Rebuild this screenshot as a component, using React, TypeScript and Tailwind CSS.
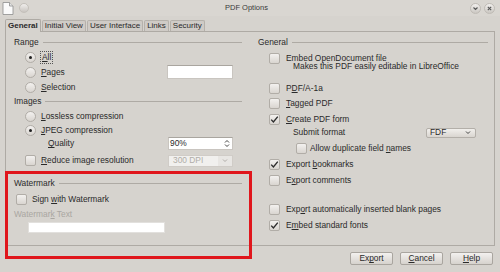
import React from "react";

function Check({ checked = false }: { checked?: boolean }) {
  return (
    <span className="w-[11px] h-[11px] shrink-0 rounded-[2px] border border-[#b1ada7] bg-gradient-to-b from-[#f3f1ef] to-[#d9d5d0] flex items-center justify-center">
      {checked && (
        <svg width="9" height="9" viewBox="0 0 9 9">
          <path d="M1.2 4.6 L3.4 7 L7.8 1.6" fill="none" stroke="#2d2d2d" strokeWidth="1.4" />
        </svg>
      )}
    </span>
  );
}

function Radio({ checked = false }: { checked?: boolean }) {
  return (
    <span className="w-[11px] h-[11px] shrink-0 rounded-full border border-[#b1ada7] bg-gradient-to-b from-[#f3f1ef] to-[#d9d5d0] flex items-center justify-center">
      {checked && <span className="w-[3px] h-[3px] rounded-full bg-[#1f1f1f]" />}
    </span>
  );
}

function U({ children }: { children: React.ReactNode }) {
  return <span className="underline underline-offset-[1px] decoration-[0.5px]">{children}</span>;
}

function Header({ label, cls }: { label: string; cls: string }) {
  return (
    <div className={`h-[12px] flex items-center ${cls}`}>
      <span>{label}</span>
      <span className="flex-1 ml-[4px] border-t border-[#aeaaa4]" />
    </div>
  );
}

export default function App() {
  return (
    <div className="relative w-[500px] h-[272px] overflow-hidden bg-[#d6d3ce] text-[#2a2a2a] text-[8.4px] leading-none font-[family-name:'Liberation_Sans',Arial,sans-serif]">
      {/* title bar */}
      <div className="h-[16px] flex items-center bg-[#d9d6d1] px-[2px]">
        <svg width="12" height="13" viewBox="0 0 12 13" className="shrink-0">
          <path d="M1 0.5 H7.5 L11 4 V12.5 H1 Z" fill="#fafafa" stroke="#8d8d8d" strokeWidth="0.8" />
          <path d="M7.5 0.5 V4 H11" fill="#e6e6e6" stroke="#8d8d8d" strokeWidth="0.8" />
        </svg>
        <span className="ml-[5px] w-[10px] h-[10px] rounded-full bg-gradient-to-b from-[#f0eeec] to-[#c9c5c0] border border-[#c4c0ba]" />
        <span className="flex-1 text-center text-[7.5px] text-[#3a3a3a] pr-[6px]">PDF Options</span>
        <span className="w-[11px] h-[11px] rounded-full bg-gradient-to-b from-[#f2f0ee] to-[#cbc7c2] border border-[#bfbbb5] flex items-center justify-center">
          <svg width="7" height="7" viewBox="0 0 7 7">
            <path d="M1.5 2.5 L3.5 4.5 L5.5 2.5" fill="none" stroke="#555" strokeWidth="1.1" />
          </svg>
        </span>
        <span className="ml-[3px] mr-[3px] w-[11px] h-[11px] rounded-full bg-gradient-to-b from-[#f2f0ee] to-[#cbc7c2] border border-[#bfbbb5] flex items-center justify-center">
          <svg width="7" height="7" viewBox="0 0 7 7">
            <path d="M1.8 1.8 L5.2 5.2 M5.2 1.8 L1.8 5.2" fill="none" stroke="#555" strokeWidth="1.1" />
          </svg>
        </span>
      </div>

      {/* tabs */}
      <div className="ml-[5px] mt-[1px] h-[14px] flex items-end text-[8px]">
        <div className="relative z-10 h-[13px] -mb-px px-[2px] flex items-center font-bold bg-[#d6d3ce] border border-b-0 border-[#aeaaa4] rounded-t-[2px]">
          General
        </div>
        <div className="h-[11px] px-[2px] ml-[1px] flex items-center bg-[#cfcbc6] border border-b-0 border-[#b5b1ab] rounded-t-[2px]">
          Initial View
        </div>
        <div className="h-[11px] px-[2px] ml-[1px] flex items-center bg-[#cfcbc6] border border-b-0 border-[#b5b1ab] rounded-t-[2px]">
          User Interface
        </div>
        <div className="h-[11px] px-[2px] ml-[1px] flex items-center bg-[#cfcbc6] border border-b-0 border-[#b5b1ab] rounded-t-[2px]">
          Links
        </div>
        <div className="h-[11px] px-[2px] ml-[1px] flex items-center bg-[#cfcbc6] border border-b-0 border-[#b5b1ab] rounded-t-[2px]">
          Security
        </div>
      </div>

      {/* panel */}
      <div className="ml-[5px] w-[490px] h-[215px] border border-[#aeaaa4] grid grid-cols-[245px_1fr]">
        {/* left column */}
        <div className="flex flex-col pl-[8px] pr-[9px]">
          <Header label="Range" cls="mt-[4px]" />
          <div className="h-[13px] mt-[3px] flex items-center pl-[11px]">
            <Radio checked />
            <span className="ml-[4px] px-[1px] py-[1px] border border-dotted border-[#555]">
              <U>A</U>ll
            </span>
          </div>
          <div className="h-[14px] mt-[1px] flex items-center pl-[11px]">
            <Radio />
            <span className="ml-[5px]">
              <U>P</U>ages
            </span>
            <span className="ml-auto mr-[9px] w-[66px] h-[14px] bg-white border border-[#c9c5c0] border-t-[#a9a59f]" />
          </div>
          <div className="h-[13px] mt-[2px] flex items-center pl-[11px]">
            <Radio />
            <span className="ml-[5px]">
              <U>S</U>election
            </span>
          </div>
          <Header label="Images" cls="mt-[1px]" />
          <div className="h-[13px] mt-[3px] flex items-center pl-[11px]">
            <Radio />
            <span className="ml-[5px]">
              <U>L</U>ossless compression
            </span>
          </div>
          <div className="h-[13px] mt-[1px] flex items-center pl-[11px]">
            <Radio checked />
            <span className="ml-[5px]">
              <U>J</U>PEG compression
            </span>
          </div>
          <div className="h-[13px] flex items-center pl-[34px]">
            <span>
              <U>Q</U>uality
            </span>
            <span className="ml-auto mr-[9px] w-[65px] h-[13px] bg-white border border-[#c9c5c0] border-t-[#a9a59f] flex items-center pl-[1px] pr-[2px]">
              <span>90%</span>
              <svg width="6" height="9" viewBox="0 0 6 9" className="ml-auto">
                <path d="M1 3.5 L3 1.5 L5 3.5 M1 5.5 L3 7.5 L5 5.5" fill="none" stroke="#444" strokeWidth="1" />
              </svg>
            </span>
          </div>
          <div className="h-[13px] mt-[4px] flex items-center pl-[11px]">
            <Check />
            <span className="ml-[5px]">
              <U>R</U>educe image resolution
            </span>
            <span className="ml-auto mr-[9px] w-[65px] h-[12px] bg-[#f1f0ee] border border-[#d0ccc7] flex items-center pl-[4px] text-[#b0ada8]">
              <span>300 DPI</span>
              <span className="ml-auto w-[14px] h-full bg-[#e8e6e3] flex items-center justify-center">
                <svg width="6" height="5" viewBox="0 0 6 5">
                  <path d="M1 1.5 L3 3.5 L5 1.5" fill="none" stroke="#b0ada8" strokeWidth="1" />
                </svg>
              </span>
            </span>
          </div>
          <Header label="Watermark" cls="mt-[10px]" />
          <div className="h-[12px] mt-[4px] flex items-center pl-[2px]">
            <Check />
            <span className="ml-[5px]">
              Sign <U>w</U>ith Watermark
            </span>
          </div>
          <div className="h-[12px] mt-[3px] flex items-center text-[#a9a6a1]">
            <span>
              Watermar<U>k</U> Text
            </span>
          </div>
          <div className="mt-[2px] ml-[14px] w-[137px] h-[11px] bg-white border border-[#e2e0dd]" />
        </div>

        {/* right column */}
        <div className="flex flex-col pl-[7px] pr-[6px]">
          <Header label="General" cls="mt-[4px]" />
          <div className="h-[12px] mt-[4px] flex items-center pl-[11px]">
            <Check />
            <span className="ml-[6px]">Embed OpenDocument file</span>
          </div>
          <div className="h-[9px] -mt-[2px] flex items-center pl-[35px]">Makes this PDF easily editable in LibreOffice</div>
          <div className="h-[12px] mt-[11px] flex items-center pl-[11px]">
            <Check />
            <span className="ml-[6px]">
              P<U>D</U>F/A-1a
            </span>
          </div>
          <div className="h-[12px] mt-[3px] flex items-center pl-[11px]">
            <Check />
            <span className="ml-[6px]">
              <U>T</U>agged PDF
            </span>
          </div>
          <div className="h-[12px] mt-[4px] flex items-center pl-[11px]">
            <Check checked />
            <span className="ml-[6px]">
              <U>C</U>reate PDF form
            </span>
          </div>
          <div className="h-[11px] mt-[2px] flex items-center pl-[35px]">
            <span>Submit format</span>
            <span className="ml-auto mr-[12px] w-[50px] h-[10px] rounded-[2px] border border-[#b3afa9] bg-gradient-to-b from-[#f1efec] to-[#d9d5d0] flex items-center pl-[3px] pr-[4px]">
              <span>FDF</span>
              <svg width="6" height="5" viewBox="0 0 6 5" className="ml-auto">
                <path d="M1 1.5 L3 3.5 L5 1.5" fill="none" stroke="#444" strokeWidth="1" />
              </svg>
            </span>
          </div>
          <div className="h-[12px] mt-[4px] flex items-center pl-[38px]">
            <Check />
            <span className="ml-[3px]">
              Allow duplicate field <U>n</U>ames
            </span>
          </div>
          <div className="h-[12px] mt-[4px] flex items-center pl-[11px]">
            <Check checked />
            <span className="ml-[6px]">
              Export <U>b</U>ookmarks
            </span>
          </div>
          <div className="h-[12px] mt-[4px] flex items-center pl-[11px]">
            <Check />
            <span className="ml-[6px]">
              E<U>x</U>port comments
            </span>
          </div>
          <div className="h-[12px] mt-[17px] flex items-center pl-[11px]">
            <Check />
            <span className="ml-[6px]">
              Exp<U>o</U>rt automatically inserted blank pages
            </span>
          </div>
          <div className="h-[12px] mt-[4px] flex items-center pl-[11px]">
            <Check checked />
            <span className="ml-[6px]">
              E<U>m</U>bed standard fonts
            </span>
          </div>
        </div>
      </div>

      {/* buttons */}
      <div className="mt-[6px] mr-[7px] flex justify-end gap-[7px]">
        <button className="w-[43px] h-[13px] rounded-[2px] border border-[#a9a59f] bg-gradient-to-b from-[#f3f1ef] to-[#d6d2cd] flex items-center justify-center text-[8.4px] text-[#2a2a2a]">
          <span>
            Ex<U>p</U>ort
          </span>
        </button>
        <button className="w-[43px] h-[13px] rounded-[2px] border border-[#a9a59f] bg-gradient-to-b from-[#f3f1ef] to-[#d6d2cd] flex items-center justify-center text-[8.4px] text-[#2a2a2a]">
          <span>
            <U>C</U>ancel
          </span>
        </button>
        <button className="w-[43px] h-[13px] rounded-[2px] border border-[#a9a59f] bg-gradient-to-b from-[#f3f1ef] to-[#d6d2cd] flex items-center justify-center text-[8.4px] text-[#2a2a2a]">
          <span>
            <U>H</U>elp
          </span>
        </button>
      </div>

      {/* red annotation */}
      <div className="absolute left-[5px] top-[171px] w-[247px] h-[88px] border-[3px] border-[#e0161c] pointer-events-none" />
    </div>
  );
}
